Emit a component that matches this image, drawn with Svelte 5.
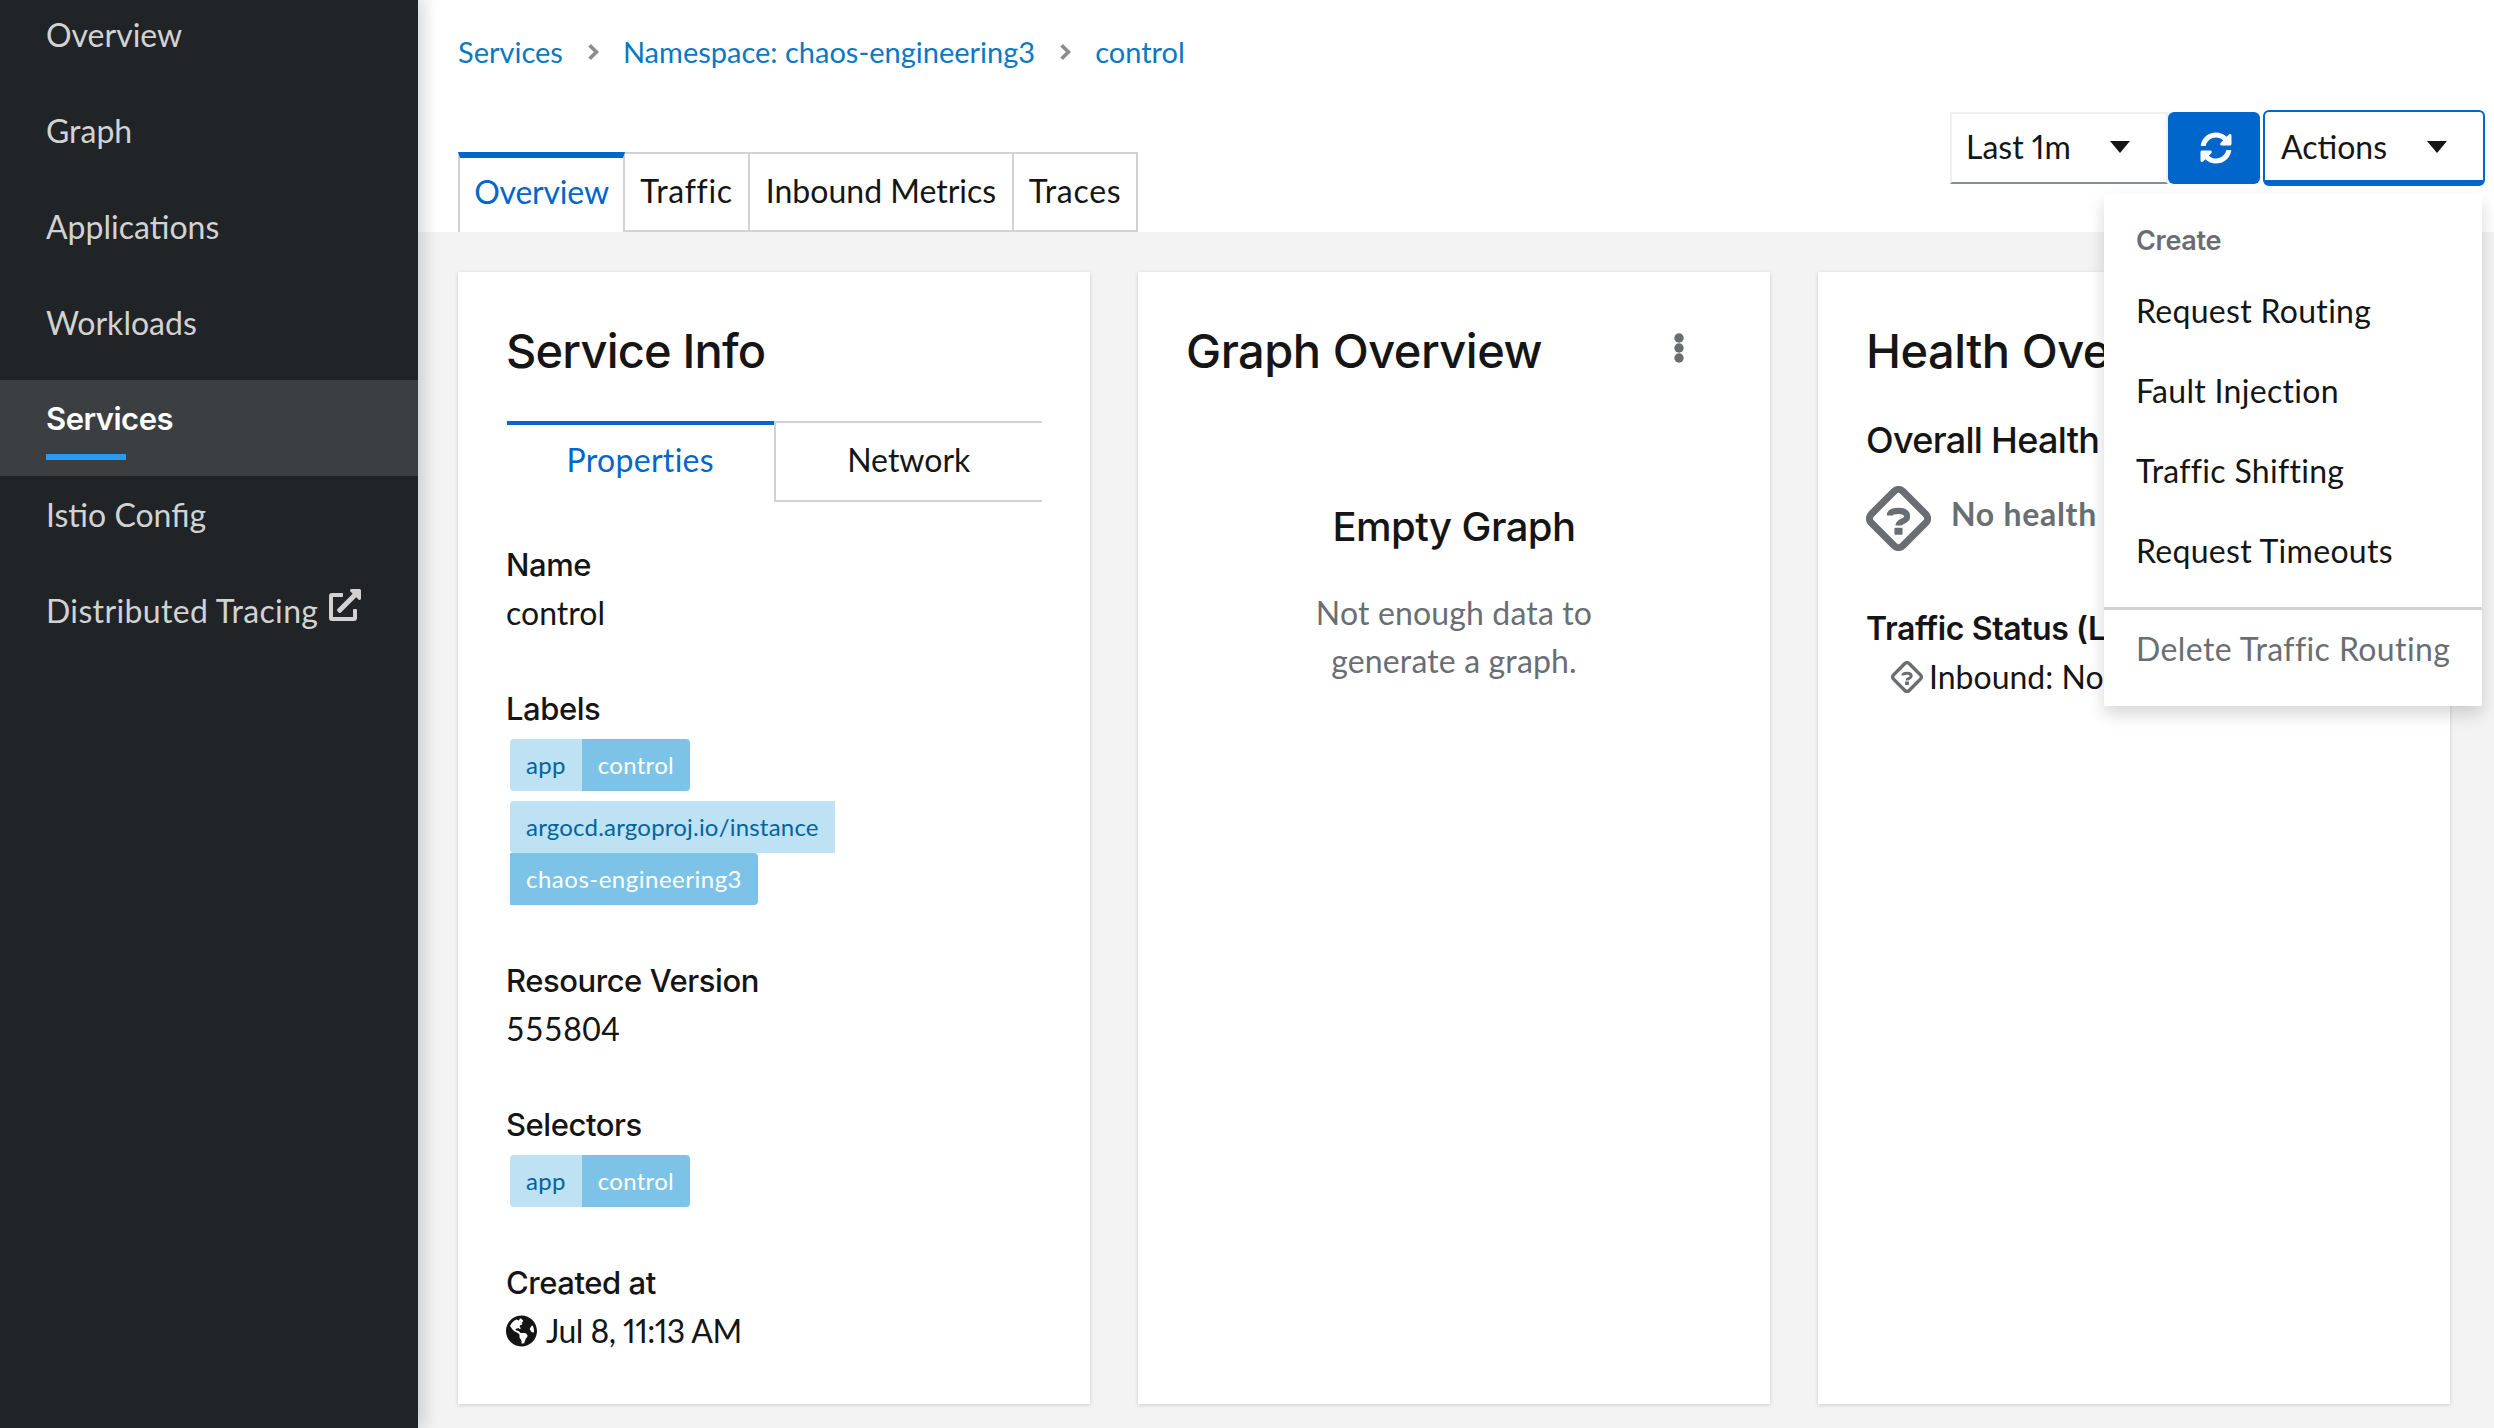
<script>
  const navItems = ['Overview', 'Graph', 'Applications', 'Workloads', 'Services', 'Istio Config']
  const pageTabs = ['Overview', 'Traffic', 'Inbound Metrics', 'Traces']
  const createItems = ['Request Routing', 'Fault Injection', 'Traffic Shifting', 'Request Timeouts']
</script>

{#snippet caret()}
  <svg class="caret" viewBox="0 0 20 12"><path d="M0 0h20L10 12z" /></svg>
{/snippet}

{#snippet unknown(cls)}
  <svg class={cls} viewBox="0 0 64 64">
    <rect class="diamond" x="10" y="10" width="44" height="44" rx="6" transform="rotate(45 32 32)" />
    <path class="qmark" d="M23.5 29c0-3.5 3.5-4.5 8.5-4.5s8.5 1.7 8.5 5.5c0 5-8.5 4.5-8.5 9" />
    <rect class="qdot" x="28" y="41" width="8" height="7" rx="1" />
  </svg>
{/snippet}

{#snippet badge(key, value)}
  <span class="badge"><span class="badge-key">{key}</span><span class="badge-value">{value}</span></span>
{/snippet}

<div class="page">
  <nav class="sidebar">
    {#each navItems as item}
      <div class="nav-item" class:active={item === 'Services'}>{item}</div>
    {/each}
    <div class="nav-item wide">
      Distributed Tracing
      <svg class="ext" viewBox="0 0 512 512"><path d="M432,320H400a16,16,0,0,0-16,16V448H64V128H208a16,16,0,0,0,16-16V80a16,16,0,0,0-16-16H48A48,48,0,0,0,0,112V464a48,48,0,0,0,48,48H400a48,48,0,0,0,48-48V336A16,16,0,0,0,432,320ZM488,0h-128c-21.37,0-32.05,25.91-17,41l35.73,35.73L135,320.37a24,24,0,0,0,0,34L157.67,377a24,24,0,0,0,34,0L435.28,133.32,471,169c15,15,41,4.5,41-17V24A24,24,0,0,0,488,0Z" /></svg>
    </div>
  </nav>

  <main class="main">
    <header class="header">
      <div class="breadcrumb">
        <span>Services</span>
        <svg class="crumb-sep" viewBox="0 0 10 16"><path d="M2 2l6 6-6 6" /></svg>
        <span>Namespace: chaos-engineering3</span>
        <svg class="crumb-sep" viewBox="0 0 10 16"><path d="M2 2l6 6-6 6" /></svg>
        <span>control</span>
      </div>
      <div class="header-row">
        <div class="tabs">
          {#each pageTabs as tab, i}
            <div class="tab" class:active={i === 0}>{tab}</div>
          {/each}
        </div>
        <div class="toolbar">
          <div class="select">Last 1m {@render caret()}</div>
          <div class="refresh">
            <svg viewBox="0 0 512 512"><path d="M370.72 133.28C339.458 104.008 298.888 87.962 255.848 88c-77.458.068-144.328 53.178-162.791 126.85-1.344 5.363-6.122 9.15-11.651 9.15H24.103c-7.498 0-13.194-6.807-11.807-14.176C33.933 94.924 134.813 8 256 8c66.448 0 126.791 26.136 171.315 68.685L463.03 40.97C478.149 25.851 504 36.559 504 57.941V192c0 13.255-10.745 24-24 24H345.941c-21.382 0-32.09-25.851-16.971-40.971l41.75-41.749zM32 296h134.059c21.382 0 32.09 25.851 16.971 40.971l-41.75 41.75c31.262 29.273 71.835 45.319 114.876 45.28 77.418-.07 144.315-53.144 162.787-126.849 1.344-5.363 6.122-9.15 11.651-9.15h57.304c7.498 0 13.194 6.807 11.807 14.176C478.067 417.076 377.187 504 256 504c-66.448 0-126.791-26.136-171.315-68.685L48.97 471.03C33.851 486.149 8 475.441 8 454.059V320c0-13.255 10.745-24 24-24z" /></svg>
          </div>
          <div class="actions">Actions {@render caret()}</div>
          <div class="menu">
            <div class="menu-title">Create</div>
            {#each createItems as item}
              <div class="menu-item">{item}</div>
            {/each}
            <div class="menu-divider"></div>
            <div class="menu-item disabled">Delete Traffic Routing</div>
          </div>
        </div>
      </div>
    </header>

    <section class="content">
      <article class="card">
        <h2 class="tight">Service Info</h2>
        <div class="card-tabs">
          <div class="card-tab active">Properties</div>
          <div class="card-tab">Network</div>
        </div>
        <div class="prop">
          <div class="prop-name">Name</div>
          <div>control</div>
        </div>
        <div class="prop">
          <div class="prop-name">Labels</div>
          <div class="badges">
            {@render badge('app', 'control')}
            <span class="badge stacked"><span class="badge-key">argocd.argoproj.io/instance</span><span class="badge-value">chaos-engineering3</span></span>
          </div>
        </div>
        <div class="prop">
          <div class="prop-name">Resource Version</div>
          <div class="version">555804</div>
        </div>
        <div class="prop">
          <div class="prop-name">Selectors</div>
          <div class="badges">{@render badge('app', 'control')}</div>
        </div>
        <div class="prop">
          <div class="prop-name">Created at</div>
          <div class="created">
            <svg class="globe" viewBox="0 0 496 512"><path d="M248 8C111.03 8 0 119.03 0 256s111.03 248 248 248 248-111.03 248-248S384.97 8 248 8zm82.29 357.6c-3.9 3.88-7.99 7.95-11.31 11.28-2.99 3-5.1 6.7-6.17 10.71-1.51 5.66-2.73 11.38-4.77 16.87l-17.39 46.85c-13.76 3-28 4.69-42.65 4.69v-27.38c1.69-12.62-7.64-36.26-22.63-51.25-6-6-9.37-14.14-9.37-22.63v-32.01c0-11.64-6.27-22.34-16.46-27.97-14.37-7.95-34.81-19.06-48.81-26.11-11.48-5.78-22.1-13.14-31.65-21.75l-.8-.72a114.792 114.792 0 0 1-18.06-20.74c-9.38-13.77-24.66-36.42-34.59-51.14 20.47-45.5 57.36-82.04 103.2-101.89l24.01 12.01C203.48 89.74 216 82.01 216 70.11v-11.3c7.99-1.29 16.12-2.11 24.42-2.43l28.3 28.3c6.25 6.25 6.25 16.38 0 22.63L264 112l-10.34 10.34c-3.12 3.12-3.12 8.19 0 11.31l4.69 4.69c3.12 3.12 3.12 8.19 0 11.31l-8 8a8.008 8.008 0 0 1-5.66 2.34h-8.99c-2.08 0-4.08.81-5.58 2.27l-9.92 9.65a8.008 8.008 0 0 0-1.58 9.31l15.59 31.19c2.66 5.32-1.21 11.58-7.15 11.58h-5.64c-1.93 0-3.79-.7-5.24-1.96l-9.28-8.06a16.017 16.017 0 0 0-15.55-3.1l-31.17 10.39a11.95 11.95 0 0 0-8.17 11.34c0 4.53 2.56 8.66 6.61 10.69l11.08 5.54c9.41 4.71 19.79 7.16 30.31 7.16s22.59 27.29 32 32h66.75c8.49 0 16.62 3.37 22.63 9.37l13.69 13.69a30.503 30.503 0 0 1 8.93 21.57 46.536 46.536 0 0 1-13.72 32.98zM417 274.25c-5.79-1.45-10.84-5-14.15-9.97l-17.98-26.97a23.97 23.97 0 0 1 0-26.62l19.59-29.38c2.32-3.47 5.5-6.29 9.24-8.15l12.98-6.49C440.2 193.59 448 223.87 448 256c0 8.67-.74 17.16-1.82 25.54L417 274.25z" /></svg>
            <span class="date">Jul 8, 11:13 AM</span>
          </div>
        </div>
      </article>

      <article class="card">
        <div class="card-head">
          <h2>Graph Overview</h2>
          <svg class="kebab" viewBox="0 0 10 30"><circle cx="5" cy="5" r="4.7" /><circle cx="5" cy="15" r="4.7" /><circle cx="5" cy="25" r="4.7" /></svg>
        </div>
        <div class="empty">
          <h3>Empty Graph</h3>
          <p>Not enough data to<br />generate a graph.</p>
        </div>
      </article>

      <article class="card">
        <h2 class="nowrap">Health Overview</h2>
        <div class="sub-title">Overall Health</div>
        <div class="health-row">
          {@render unknown('unknown-lg')}
          <span class="no-health">No health information</span>
        </div>
        <div class="sub-title traffic">Traffic Status (Last 1m)</div>
        <div class="inbound">
          {@render unknown('unknown-sm')}
          <span class="nowrap">Inbound: No requests</span>
        </div>
      </article>
    </section>
  </main>
</div>

<style>
  :global(body) {
    margin: 0;
    overflow: hidden;
    font-family: Lato, "Noto Sans", sans-serif;
    font-size: 32px;
    line-height: 48px;
    color: #151515;
  }

  .page {
    display: flex;
    height: 1428px;
    overflow: hidden;
  }

  .sidebar {
    flex: 0 0 418px;
    margin-top: -4px;
    background: #212427;
    color: #d2d2d2;
    box-shadow: 6px 0 16px rgba(3, 3, 3, 0.16);
    position: relative;
    z-index: 2;
  }

  .nav-item {
    position: relative;
    height: 96px;
    padding: 15px 0 0 46px;
    box-sizing: border-box;
  }

  .nav-item.wide {
    letter-spacing: 0.35px;
  }

  .nav-item.active {
    background: #3c3f42;
    color: #fff;
    font-family: Inter, sans-serif;
    font-weight: 600;
    font-size: 31px;
    letter-spacing: -0.5px;
  }

  .nav-item.active::after {
    content: '';
    position: absolute;
    left: 46px;
    top: 74px;
    width: 80px;
    height: 6px;
    background: #2b9af3;
  }

  .ext {
    width: 32px;
    height: 32px;
    fill: #d2d2d2;
    margin-left: 2px;
    vertical-align: 2px;
  }

  .main {
    flex: 1;
    min-width: 0;
    display: flex;
    flex-direction: column;
    background: #f3f3f3;
  }

  .header {
    background: #fff;
    padding: 28px 9px 0 40px;
    height: 232px;
    box-sizing: border-box;
  }

  .breadcrumb {
    display: flex;
    align-items: center;
    gap: 24px;
    height: 48px;
    font-size: 29px;
    color: #0a78c2;
  }

  .crumb-sep {
    width: 12px;
    height: 18px;
    fill: none;
    stroke: #8a8d90;
    stroke-width: 3.4;
  }

  .header-row {
    display: flex;
    justify-content: space-between;
    margin-top: 34px;
    height: 122px;
  }

  .tabs {
    display: flex;
    align-self: flex-end;
    height: 80px;
  }

  .tab {
    justify-content: center;
    border: 2px solid #d2d2d2;
    border-left-width: 0;
    padding-bottom: 2px;
    display: flex;
    align-items: center;
    box-sizing: border-box;
  }

  .tab:nth-child(1) {
    width: 167px;
  }

  .tab:nth-child(2) {
    width: 125px;
    letter-spacing: 0.7px;
  }

  .tab:nth-child(3) {
    width: 264px;
  }

  .tab:nth-child(4) {
    width: 124px;
    letter-spacing: 0.7px;
  }

  .tab.active {
    color: #06c;
    border-width: 6px 2px 0 2px;
    border-top-color: #06c;
    padding-bottom: 6px;
    letter-spacing: -0.2px;
  }

  .toolbar {
    position: relative;
    display: flex;
    align-items: center;
    align-self: flex-start;
    height: 76px;
  }

  .select {
    width: 218px;
    height: 72px;
    box-sizing: border-box;
    border: 2px solid #f0f0f0;
    border-bottom-color: #8a8d90;
    padding: 0 0 2px 14px;
    display: flex;
    align-items: center;
    font-variant-numeric: proportional-nums;
  }

  .refresh {
    width: 92px;
    height: 72px;
    margin-right: 3px;
    padding-left: 4px;
    box-sizing: border-box;
    border-radius: 6px;
    background: #06c;
    display: flex;
    align-items: center;
    justify-content: center;
  }

  .refresh svg {
    width: 32px;
    height: 32px;
    fill: #fff;
  }

  .actions {
    width: 222px;
    height: 76px;
    box-sizing: border-box;
    border: 2px solid #06c;
    border-bottom-width: 6px;
    border-radius: 6px;
    padding: 2px 0 0 16px;
    display: flex;
    align-items: center;
  }

  .caret {
    width: 20px;
    height: 12px;
    fill: #151515;
    margin-left: auto;
    margin-right: 36px;
  }

  .menu {
    position: absolute;
    top: 84px;
    right: 3px;
    width: 378px;
    height: 512px;
    box-sizing: border-box;
    padding-top: 16px;
    background: #fff;
    box-shadow: 0 8px 16px rgba(3, 3, 3, 0.16);
    z-index: 5;
  }

  .menu-title {
    height: 61px;
    padding: 7px 32px 0;
    font-family: Inter, sans-serif;
    font-size: 27px;
    font-weight: 600;
    letter-spacing: -0.3px;
    color: #6a6e73;
    box-sizing: border-box;
  }

  .menu-item {
    height: 80px;
    padding: 16px 32px;
    box-sizing: border-box;
    white-space: nowrap;
    letter-spacing: 0.3px;
  }

  .menu-item.disabled {
    color: #6a6e73;
    padding-top: 15px;
    letter-spacing: 0.4px;
  }

  .menu-divider {
    height: 3px;
    margin-top: 16px;
    background: #d2d2d2;
  }

  .content {
    flex: 1;
    display: grid;
    grid-template-columns: repeat(3, 632px);
    gap: 48px;
    align-items: start;
    padding: 40px 0 0 40px;
  }

  .card {
    height: 1132px;
    box-sizing: border-box;
    padding: 48px;
    background: #fff;
    box-shadow: 0 1px 4px rgba(3, 3, 3, 0.16);
    overflow: hidden;
  }

  h2 {
    margin: 0;
    height: 64px;
    font-family: Inter, sans-serif;
    font-size: 47px;
    font-weight: 500;
    line-height: 62px;
    letter-spacing: -0.5px;
  }

  h2.tight {
    letter-spacing: -0.8px;
  }

  .nowrap {
    white-space: nowrap;
  }

  .card-tabs {
    display: flex;
    margin: 37px 0 0 1px;
    height: 81px;
  }

  .card-tab {
    flex: 1;
    display: flex;
    align-items: center;
    justify-content: center;
    padding-bottom: 3px;
    border-top: 2px solid #d2d2d2;
    border-bottom: 2px solid #d2d2d2;
    border-left: 2px solid #d2d2d2;
    box-sizing: border-box;
  }

  .card-tab.active {
    color: #06c;
    border: 0;
    border-top: 4px solid #06c;
    padding-bottom: 8px;
    letter-spacing: 0.3px;
  }

  .prop {
    margin-top: 48px;
  }

  .card-tabs + .prop {
    margin-top: 39px;
  }

  .prop-name {
    font-family: Inter, sans-serif;
    font-size: 31px;
    font-weight: 500;
    letter-spacing: -0.45px;
  }

  .version {
    letter-spacing: 0.5px;
  }

  .badges {
    display: flex;
    flex-direction: column;
    align-items: flex-start;
    gap: 10px;
    margin: 6px 0 0 4px;
    padding-bottom: 4px;
  }

  .badge {
    display: inline-flex;
    font-size: 24px;
    line-height: 52px;
    white-space: nowrap;
    letter-spacing: 0.3px;
  }

  .badge.stacked {
    flex-direction: column;
    align-items: flex-start;
  }

  .badge.stacked .badge-key {
    letter-spacing: 0.2px;
  }

  .badge.stacked .badge-value {
    letter-spacing: 0.5px;
  }

  .badge-key {
    padding: 0 16px;
    background: #bee1f4;
    color: #00659c;
    border-radius: 4px 0 0 4px;
  }

  .badge-value {
    padding: 0 16px;
    background: #7dc3e8;
    color: #fff;
    border-radius: 0 4px 4px 0;
  }

  .created {
    display: flex;
    align-items: center;
    gap: 9px;
  }

  .date {
    font-variant-numeric: proportional-nums;
    letter-spacing: -0.55px;
  }

  .globe {
    width: 31px;
    height: 32px;
    fill: #151515;
  }

  .card-head {
    display: flex;
    justify-content: space-between;
    align-items: center;
  }

  .kebab {
    flex: none;
    width: 10px;
    height: 30px;
    fill: #6a6e73;
    margin: 0 38px 8px 0;
  }

  .empty {
    margin-top: 115px;
    text-align: center;
  }

  h3 {
    margin: 0;
    height: 56px;
    font-family: Inter, sans-serif;
    font-size: 40px;
    font-weight: 500;
    line-height: 56px;
    letter-spacing: -0.55px;
  }

  .empty p {
    margin: 34px 0 0;
    color: #6a6e73;
    letter-spacing: 0.15px;
  }

  .sub-title {
    margin-top: 32px;
    font-family: Inter, sans-serif;
    font-size: 36px;
    line-height: 48px;
    font-weight: 500;
    letter-spacing: -0.7px;
  }

  .sub-title.traffic {
    margin-top: 54px;
    font-size: 32px;
    font-weight: 600;
    letter-spacing: -0.4px;
  }

  .health-row {
    display: flex;
    align-items: center;
    gap: 20px;
    margin-top: 22px;
    color: #6a6e73;
    font-weight: 700;
    white-space: nowrap;
    letter-spacing: 0.7px;
  }

  .no-health {
    margin-bottom: 10px;
  }

  .unknown-lg {
    flex: none;
    width: 65px;
    height: 65px;
  }

  .unknown-sm {
    flex: none;
    width: 32px;
    height: 32px;
  }

  .diamond {
    fill: none;
    stroke: #6a6e73;
    stroke-width: 7;
  }

  .qmark {
    fill: none;
    stroke: #6a6e73;
    stroke-width: 6;
  }

  .qdot {
    fill: #6a6e73;
  }

  .inbound {
    display: flex;
    align-items: center;
    gap: 6px;
    margin-left: 25px;
  }
</style>
